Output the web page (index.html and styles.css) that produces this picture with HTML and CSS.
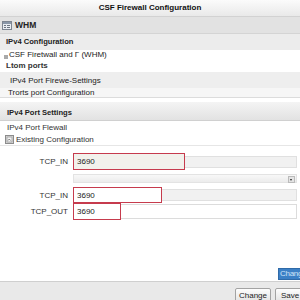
FILE: index.html
```html
<!DOCTYPE html>
<html lang="en">
<head>
    <meta charset="UTF-8">
    <title>CSF Firewall Configuration</title>
    <link rel="stylesheet" href="styles.css">
</head>
<body>
    <div class="window">
        <div class="titlebar">CSF Firewall Configuration</div>

        <div class="whm">
            <svg class="whm-icon" width="10" height="9" viewBox="0 0 10 9">
                <rect x="0.5" y="0.5" width="9" height="8" fill="#e8ecf2" stroke="#7d8591"/>
                <rect x="1" y="1" width="8" height="2" fill="#8a97a8"/>
                <rect x="2" y="4" width="2" height="1" fill="#6b7480"/>
                <rect x="5" y="4" width="3" height="1" fill="#6b7480"/>
                <rect x="2" y="6" width="2" height="1" fill="#6b7480"/>
                <rect x="5" y="6" width="3" height="1" fill="#6b7480"/>
            </svg>
            <span>WHM</span>
        </div>

        <div class="group-head">IPv4 Configuration</div>
        <div class="item item-small">
            <span class="dot"></span>
            <span>CSF Firetwall and &Gamma; (WHM)</span>
        </div>
        <div class="item item-bold">Ltom ports</div>
        <div class="item item-shaded">IPv4 Port Firewe-Settings</div>
        <div class="item item-last">Trorts port Configuration</div>

        <div class="section-head">IPv4 Port Settings</div>
        <div class="item item-plain">IPv4 Port Flewall</div>
        <div class="item item-plain item-rule">
            <svg class="cfg-icon" width="9" height="9" viewBox="0 0 9 9">
                <rect x="0.5" y="0.5" width="8" height="8" fill="#dcdcdc" stroke="#8c8c8c"/>
                <rect x="2" y="2" width="5" height="5" fill="#f4f4f4" stroke="#9a9a9a" stroke-width="0.8"/>
                <path d="M3 5.5 L4.3 4 L5.5 5.5" fill="none" stroke="#666" stroke-width="0.8"/>
            </svg>
            <span>Existing Configuration</span>
        </div>

        <div class="form">
            <div class="form-row row-tall">
                <label class="field-label">TCP_IN</label>
                <input class="port-input port-wide" value="3690">
                <span class="track"></span>
            </div>
            <div class="form-row row-select">
                <span class="field-label"></span>
                <div class="select-bar"><span class="select-arrow"></span></div>
            </div>
            <div class="form-row row-pair">
                <label class="field-label">TCP_IN</label>
                <input class="port-input port-mid" value="3690">
                <span class="track"></span>
            </div>
            <div class="form-row">
                <label class="field-label">TCP_OUT</label>
                <input class="port-input port-short" value="3690">
                <span class="track track-white"></span>
            </div>
        </div>

        <div class="spacer"></div>

        <div class="apply-row">
            <button class="btn-blue">Chang</button>
        </div>

        <div class="footer">
            <button class="btn">Change</button>
            <button class="btn btn-save">Save</button>
        </div>
    </div>
</body>
</html>
```

FILE: styles.css
```css
body {
    margin: 0;
    width: 300px;
    height: 300px;
    overflow: hidden;
    background: #fff;
    font-family: "Liberation Sans", Arial, sans-serif;
    font-size: 8px;
    color: #222;
}

.window {
    display: flex;
    flex-direction: column;
    height: 300px;
}

.titlebar {
    height: 16px;
    line-height: 16px;
    text-align: center;
    font-weight: bold;
    color: #111;
    background: linear-gradient(#fbfbfb, #e9e9e9);
    border-bottom: 1px solid #d2d2d2;
}

.whm {
    height: 16px;
    display: flex;
    align-items: center;
    gap: 3px;
    padding-left: 2px;
    font-weight: bold;
    font-size: 8.5px;
    background: #e2e2e2;
    border-bottom: 1px solid #d4d4d4;
}

.group-head {
    height: 16px;
    line-height: 16px;
    padding-left: 6px;
    font-weight: bold;
    font-size: 7.6px;
    background: #ececec;
}

.item {
    display: flex;
    align-items: center;
    padding-left: 6px;
}

.item-small {
    height: 9px;
    padding-left: 4px;
    gap: 1px;
}

.dot {
    width: 4px;
    height: 4px;
    margin-top: 4px;
    background: #a9a9a9;
}

.item-bold {
    height: 13px;
    font-weight: bold;
    color: #333;
}

.item-shaded {
    height: 16px;
    padding-left: 10px;
    background: #eeeeee;
}

.item-last {
    height: 9px;
    padding-left: 8px;
    background: #f6f6f6;
    border-bottom: 1px solid #dcdcdc;
}

.section-head {
    height: 18px;
    line-height: 22px;
    margin-top: 4px;
    padding-left: 7px;
    font-weight: bold;
    font-size: 7.6px;
    background: linear-gradient(#f4f4f4, #e2e2e2);
    border-bottom: 1px solid #d0d0d0;
}

.item-plain {
    height: 12px;
    padding-left: 7px;
    color: #333;
}

.item-rule {
    padding-left: 5px;
    gap: 2px;
    border-bottom: 1px solid #e6e6e6;
}

.form {
    display: flex;
    flex-direction: column;
    padding: 7px 3px 0 0;
}

.form-row {
    display: flex;
    align-items: center;
}

.row-select {
    margin-top: 4px;
    height: 9px;
}

.row-pair {
    margin-top: 4px;
}

.field-label {
    width: 68px;
    margin-right: 5px;
    text-align: right;
    color: #333;
}

.port-input {
    box-sizing: border-box;
    height: 17px;
    padding: 0 3px;
    border: 1.5px solid #c63b4d;
    font-family: inherit;
    font-size: 8px;
    color: #222;
    background: #fff;
    outline: none;
}

.port-wide {
    width: 112px;
    background: #f2f1ec;
}

.port-mid {
    width: 89px;
    height: 16px;
}

.port-short {
    width: 48px;
}

.track {
    flex: 1;
    height: 10px;
    background: #f1f1f1;
    border: 1px solid #e0e0e0;
    border-left: none;
}

.track-white {
    height: 13px;
    background: #fff;
    border-color: #dcdcdc;
}

.select-bar {
    flex: 1;
    height: 9px;
    position: relative;
    background: linear-gradient(#f8f8f8, #ececec);
    border: 1px solid #e3e3e3;
    box-sizing: border-box;
}

.select-arrow {
    position: absolute;
    right: 1px;
    top: 1px;
    width: 5px;
    height: 5px;
    background: #e4e4e4;
    border: 0.5px solid #bbb;
}

.select-arrow::after {
    content: "";
    position: absolute;
    left: 1px;
    top: 2px;
    border-left: 1.5px solid transparent;
    border-right: 1.5px solid transparent;
    border-top: 2px solid #222;
}

.spacer {
    flex: 1;
}

.apply-row {
    display: flex;
    justify-content: flex-end;
    margin-bottom: 1px;
}

.btn-blue {
    width: 22px;
    height: 12px;
    padding: 0 0 0 1px;
    overflow: hidden;
    text-align: left;
    white-space: nowrap;
    letter-spacing: -0.3px;
    border: 1px solid #2f6aa8;
    border-right: none;
    background: #3c80c6;
    color: #cfe3f7;
    font-family: inherit;
    font-size: 8px;
    line-height: 10px;
}

.footer {
    height: 19px;
    display: flex;
    justify-content: flex-end;
    gap: 4px;
    padding-top: 6px;
    box-sizing: border-box;
    background: #e9e9e9;
    border-top: 1px solid #cfcfcf;
}

.btn {
    height: 14px;
    padding: 0 3px;
    border: 1px solid #a3a3a3;
    border-radius: 2px;
    background: linear-gradient(#fdfdfd, #e4e4e4);
    font-family: inherit;
    font-size: 8px;
    color: #222;
}

.btn-save {
    width: 30px;
    margin-right: -5px;
}
```
